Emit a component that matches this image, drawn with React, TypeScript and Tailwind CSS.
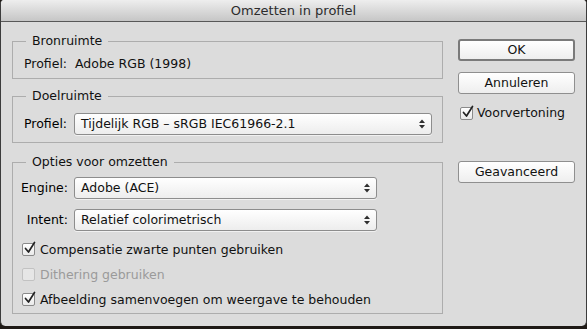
import React from "react";

const font = { fontFamily: '"DejaVu Sans", "Liberation Sans", sans-serif' };

function Arrows() {
  return (
    <svg width="6" height="10" viewBox="0 0 6 10" className="shrink-0">
      <polygon points="0,4 3,0.5 6,4" fill="#2e2e2e" />
      <polygon points="0,6 6,6 3,9.5" fill="#2e2e2e" />
    </svg>
  );
}

function Select({ value, w }: { value: string; w: string }) {
  return (
    <div
      className={`${w} h-[22px] flex items-center justify-between pl-[6px] pr-[6px] rounded-[3px] border border-[#8d8d8d] bg-gradient-to-b from-[#ffffff] to-[#ededed] shadow-[0_1px_0_rgba(255,255,255,0.6)]`}
    >
      <span className="whitespace-nowrap text-[#111]">{value}</span>
      <Arrows />
    </div>
  );
}

function Check({ checked, disabled }: { checked?: boolean; disabled?: boolean }) {
  return (
    <span
      className={`relative inline-block w-[13px] h-[13px] shrink-0 rounded-[2px] border ${
        disabled ? "border-[#c2c2c2] bg-[#e6e6e6]" : "border-[#8a8a8a] bg-gradient-to-b from-[#ffffff] to-[#eaeaea]"
      }`}
    >
      {checked && (
        <svg width="14" height="14" viewBox="0 0 14 14" className="absolute left-[0px] top-[-3px]">
          <path d="M2.5 7.5 L5.5 11 L11.5 1.5" fill="none" stroke="#222" strokeWidth="1.7" strokeLinecap="round" strokeLinejoin="round" />
        </svg>
      )}
    </span>
  );
}

function CheckRow({ label, checked, disabled }: { label: string; checked?: boolean; disabled?: boolean }) {
  return (
    <div className="h-[25px] flex items-center gap-[5px]">
      <Check checked={checked} disabled={disabled} />
      <span className={`whitespace-nowrap ${disabled ? "text-[#9a9a9a]" : "text-[#111]"}`}>{label}</span>
    </div>
  );
}

function Button({ label, def, mt }: { label: string; def?: boolean; mt: string }) {
  return (
    <div
      className={`${mt} w-[117px] h-[22px] flex items-center justify-center rounded-[3px] bg-gradient-to-b from-[#ffffff] to-[#eeeeee] ${
        def ? "border-2 border-[#7a7a7a]" : "border border-[#8f8f8f]"
      } text-[#111]`}
    >
      {label}
    </div>
  );
}

export default function App() {
  return (
    <div className="w-[587px] h-[329px] bg-[#1f1a16] text-[12.5px] leading-[16px]" style={font}>
      <div className="h-[326px] flex flex-col bg-[#dcdcdc] border-x border-[#3c3c3c] rounded-b-[5px] overflow-hidden rounded-t-[4px]">
        <div className="h-[22px] shrink-0 flex items-center justify-center bg-gradient-to-b from-[#eeeeee] to-[#c6c6c6] border-b border-[#585858] text-[#2c2c2c] text-[13px]">
          Omzetten in profiel
        </div>
        <div className="flex flex-1">
          <div className="w-[442px] pl-[11px] flex flex-col">
            <fieldset className="mt-[11px] border border-[#adadad] p-0">
              <legend className="ml-[13px] px-[6px] text-[#111]">Bronruimte</legend>
              <div className="pl-[11px] pt-[7px] pb-[6px]">
                <div className="h-[16px] whitespace-nowrap text-[#111]">Profiel:&nbsp; Adobe RGB (1998)</div>
              </div>
            </fieldset>
            <fieldset className="mt-[9px] border border-[#adadad] p-0">
              <legend className="ml-[13px] px-[6px] text-[#111]">Doelruimte</legend>
              <div className="pl-[11px] pt-[9px] pb-[7px] flex items-center gap-[6px]">
                <span className="w-[44px] whitespace-nowrap">Profiel:</span>
                <Select value="Tijdelijk RGB – sRGB IEC61966-2.1" w="w-[358px]" />
              </div>
            </fieldset>
            <fieldset className="mt-[11px] border border-[#adadad] p-0">
              <legend className="ml-[13px] px-[6px] text-[#111]">Opties voor omzetten</legend>
              <div className="pl-[9px] pt-[7px] pb-[1px]">
                <div className="flex items-center gap-[6px]">
                  <span className="w-[46px] flex justify-end whitespace-nowrap">Engine:</span>
                  <Select value="Adobe (ACE)" w="w-[303px]" />
                </div>
                <div className="mt-[10px] flex items-center gap-[6px]">
                  <span className="w-[46px] flex justify-end whitespace-nowrap">Intent:</span>
                  <Select value="Relatief colorimetrisch" w="w-[303px]" />
                </div>
                <div className="mt-[6px]">
                  <CheckRow label="Compensatie zwarte punten gebruiken" checked />
                  <CheckRow label="Dithering gebruiken" disabled />
                  <CheckRow label="Afbeelding samenvoegen om weergave te behouden" checked />
                </div>
              </div>
            </fieldset>
          </div>
          <div className="pl-[15px] flex flex-col">
            <Button label="OK" def mt="mt-[17px]" />
            <Button label="Annuleren" mt="mt-[11px]" />
            <div className="mt-[11px] ml-[2px] flex items-center gap-[4px] h-[16px]">
              <Check checked />
              <span className="whitespace-nowrap text-[#111]">Voorvertoning</span>
            </div>
            <Button label="Geavanceerd" mt="mt-[40px]" />
          </div>
        </div>
      </div>
    </div>
  );
}
